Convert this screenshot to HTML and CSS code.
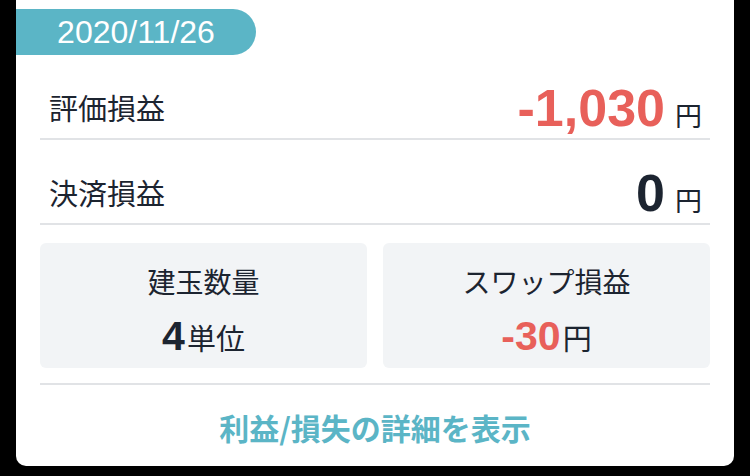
FILE: index.html
```html
<!DOCTYPE html>
<html lang="ja">
<head>
<meta charset="UTF-8">
<meta name="viewport" content="width=device-width, initial-scale=1.0">
<title>損益</title>
<link rel="stylesheet" href="styles.css">
</head>
<body>

<div class="card">
    <div class="date-tab">2020/11/26</div>
    <div class="card-body">
        <div class="row">
            <span class="row-label">評価損益</span>
            <span class="row-value"><span class="num minus">-1,030</span><span class="yen">円</span></span>
        </div>
        <div class="row">
            <span class="row-label">決済損益</span>
            <span class="row-value"><span class="num">0</span><span class="yen">円</span></span>
        </div>
        <div class="stats">
            <div class="stat">
                <div class="stat-label">建玉数量</div>
                <div class="stat-value"><span class="num">4</span>単位</div>
            </div>
            <div class="stat">
                <div class="stat-label">スワップ損益</div>
                <div class="stat-value"><span class="num minus">-30</span>円</div>
            </div>
        </div>
        <a class="detail-link" href="#">利益/損失の詳細を表示</a>
    </div>
</div>

</body>
</html>
```

FILE: styles.css
```css
body {
    margin: 0;
    background: #000;
    font-family: "Noto Sans CJK JP", "Liberation Sans", sans-serif;
    color: #1c2430;
}
.card {
    margin: 0 16px;
    padding-top: 9px;
    height: 457px;
    background: #fff;
    border-radius: 0 0 10px 10px;
}
.date-tab {
    width: 240px;
    height: 46px;
    line-height: 46px;
    background: #5bb5c6;
    color: #fff;
    font-family: "Liberation Sans", sans-serif;
    font-size: 32px;
    text-align: center;
    border-radius: 0 23px 23px 0;
}
.card-body {
    padding: 0 24px;
}
.row {
    display: flex;
    justify-content: space-between;
    align-items: center;
    height: 81px;
    padding-top: 2px;
    box-sizing: content-box;
    border-bottom: 2px solid #e1e3e6;
}
.row-label {
    font-size: 29px;
    padding-left: 9px;
    padding-top: 18px;
}
.row-value {
    display: flex;
    align-items: baseline;
    padding-right: 8px;
    padding-top: 20px;
}
.num {
    font-family: "Liberation Sans", sans-serif;
    font-weight: bold;
}
.row-value .num {
    font-size: 52px;
}
.minus {
    color: #e8605a;
}
.yen {
    font-size: 27px;
    margin-left: 10px;
}
.stats {
    display: grid;
    grid-template-columns: 1fr 1fr;
    gap: 16px;
    padding: 18px 0 15px;
    border-bottom: 2px solid #e1e3e6;
}
.stat {
    height: 125px;
    background: #f2f4f6;
    border-radius: 6px;
    text-align: center;
    box-sizing: border-box;
    padding-top: 19px;
}
.stat-label {
    font-size: 28px;
    line-height: 38px;
}
.stat-value {
    font-size: 29px;
    line-height: 48px;
    margin-top: 12px;
}
.stat-value .num {
    font-size: 41px;
    margin-right: 2px;
}
.detail-link {
    display: block;
    text-align: center;
    color: #5bb5c6;
    font-size: 30px;
    font-weight: bold;
    text-decoration: none;
    padding-top: 20px;
}
```
